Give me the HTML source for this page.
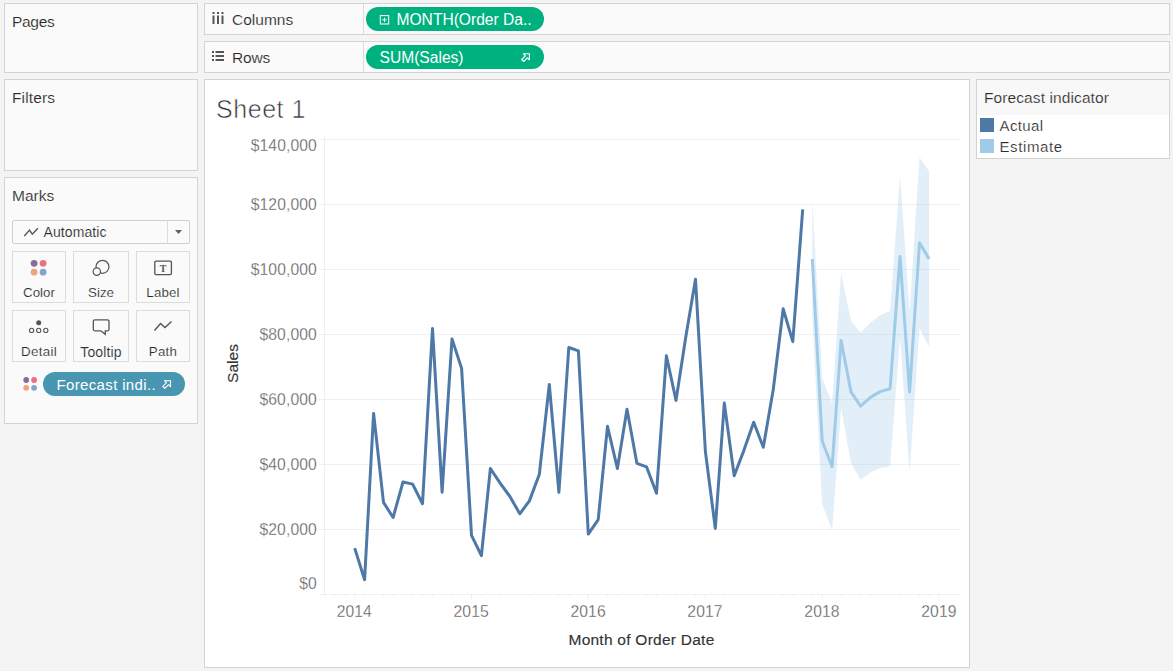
<!DOCTYPE html>
<html lang="en">
<head>
<meta charset="utf-8">
<title>Sheet 1</title>
<style>
html,body{margin:0;padding:0}
body{width:1173px;height:671px;background:#f4f4f4;position:relative;overflow:hidden;
 font-family:"Liberation Sans",Arial,sans-serif;font-size:15.5px;color:#2a2a2a}
.card{position:absolute;box-sizing:border-box;background:#fafafa;border:1px solid #d3d3d3}
.t{position:absolute;white-space:nowrap;line-height:18px;-webkit-text-stroke:0.15px #fafafa}
.btn{position:absolute;box-sizing:border-box;border:1px solid #dcdcdc;background:#fafafa;height:52px}
.btn span{position:absolute;left:0;right:0;top:32px;text-align:center;font-size:13.3px;line-height:18px;color:#2a2a2a;-webkit-text-stroke:0.15px #fafafa}
.pill{position:absolute;box-sizing:border-box;height:24px;border-radius:12px;color:#fff;font-size:15.6px;line-height:25.6px;white-space:nowrap}
.green{background:#00b180}
.blue{background:#4996b2}
svg{position:absolute;left:0;top:0;overflow:visible}
.ax text{font-family:"Liberation Sans",Arial,sans-serif;font-size:15.7px;letter-spacing:0.1px;fill:#555;stroke:#fff;stroke-width:0.3px}
</style>
</head>
<body>

<!-- left column cards -->
<div class="card" style="left:4px;top:3px;width:194px;height:70px"></div>
<div class="t" style="left:12px;top:13px;letter-spacing:-0.3px">Pages</div>

<div class="card" style="left:4px;top:79px;width:194px;height:92px"></div>
<div class="t" style="left:12px;top:89px;letter-spacing:0.15px">Filters</div>

<div class="card" style="left:4px;top:177px;width:194px;height:247px"></div>
<div class="t" style="left:12px;top:187px">Marks</div>

<!-- marks dropdown -->
<div class="card" style="left:12px;top:220px;width:178px;height:24px;border-color:#cfcfcf;border-radius:2px"></div>
<div style="position:absolute;left:167px;top:221px;width:1px;height:22px;background:#dcdcdc"></div>
<div class="t" style="left:43.5px;top:223px;font-size:14px;letter-spacing:0.1px">Automatic</div>

<!-- marks buttons -->
<div class="btn" style="left:12px;top:251px;width:54px"><span>Color</span></div>
<div class="btn" style="left:73px;top:251px;width:56px"><span>Size</span></div>
<div class="btn" style="left:136px;top:251px;width:54px"><span style="letter-spacing:0.15px">Label</span></div>
<div class="btn" style="left:12px;top:310px;width:54px"><span style="letter-spacing:0.3px">Detail</span></div>
<div class="btn" style="left:73px;top:310px;width:56px"><span style="font-size:14px;letter-spacing:0.15px">Tooltip</span></div>
<div class="btn" style="left:136px;top:310px;width:54px"><span style="letter-spacing:0.3px">Path</span></div>

<div class="pill blue" style="left:43px;top:372px;width:142px;padding-left:13.5px;font-size:15px;letter-spacing:0.35px">Forecast indi..</div>

<!-- shelves -->
<div class="card" style="left:204px;top:3px;width:966px;height:32px"></div>
<div class="card" style="left:204px;top:41px;width:966px;height:32px"></div>
<div style="position:absolute;left:363px;top:4px;width:1px;height:30px;background:#dcdcdc"></div>
<div style="position:absolute;left:363px;top:42px;width:1px;height:30px;background:#dcdcdc"></div>
<div class="t" style="left:232px;top:11px">Columns</div>
<div class="t" style="left:232px;top:49px;letter-spacing:-0.2px">Rows</div>
<div class="pill green" style="left:366px;top:7px;width:178px;padding-left:30.5px">MONTH(Order Da..</div>
<div class="pill green" style="left:366px;top:45px;width:178px;padding-left:13.5px">SUM(Sales)</div>

<!-- sheet -->
<div class="card" style="left:204px;top:79px;width:766px;height:589px;background:#fff"></div>
<div class="t" style="left:216px;top:94px;font-size:25px;line-height:30px;color:#333;letter-spacing:0.55px;-webkit-text-stroke:0.6px #fff">Sheet 1</div>

<!-- legend -->
<div class="card" style="left:976px;top:79px;width:194px;height:80px;background:#fff"></div>
<div style="position:absolute;left:977px;top:80px;width:192px;height:35px;background:#f8f8f8"></div>
<div class="t" style="left:984px;top:89px;color:#2a2a2a;letter-spacing:0.1px;-webkit-text-stroke:0.2px #f8f8f8">Forecast indicator</div>
<div style="position:absolute;left:980px;top:118px;width:14px;height:14px;background:#4e79a7"></div>
<div style="position:absolute;left:980px;top:139px;width:14px;height:14px;background:#a0cbe8"></div>
<div class="t" style="left:999.5px;top:117px;font-size:15px;color:#2a2a2a;letter-spacing:0.4px;-webkit-text-stroke:0.2px #fff">Actual</div>
<div class="t" style="left:999.5px;top:138px;font-size:15px;color:#2a2a2a;letter-spacing:0.6px;-webkit-text-stroke:0.2px #fff">Estimate</div>

<!-- icons + chart -->
<svg width="1173" height="671" viewBox="0 0 1173 671">
 <!-- columns icon -->
 <g fill="#555">
  <rect x="212.5" y="15.5" width="2" height="8.5"/><rect x="217" y="15.5" width="2" height="8.5"/><rect x="221.5" y="15.5" width="2" height="8.5"/>
  <rect x="212.5" y="12" width="2" height="2"/><rect x="217" y="12" width="2" height="2"/><rect x="221.5" y="12" width="2" height="2"/>
 </g>
 <!-- rows icon -->
 <g fill="#555">
  <rect x="215.5" y="51" width="8.5" height="2"/><rect x="215.5" y="55" width="8.5" height="2"/><rect x="215.5" y="59" width="8.5" height="2"/>
  <rect x="212" y="51" width="2" height="2"/><rect x="212" y="55" width="2" height="2"/><rect x="212" y="59" width="2" height="2"/>
 </g>
 <!-- plus box in pill -->
 <g fill="none" stroke="#fff" stroke-width="1">
  <rect x="380.3" y="15.6" width="8.4" height="8.4"/><path d="M382.3 19.8h4.4M384.5 17.6v4.4"/>
 </g>
 <!-- arrow in rows pill -->
 <path d="M523.4 53.8H529.4V59.8L527.4 57.8 523.7 61.5 521.7 59.5 525.4 55.8Z" fill="none" stroke="#fff" stroke-width="1.1" stroke-linejoin="round"/>
 <!-- arrow in marks pill -->
 <path d="M164.5 380.7H170.5V386.7L168.5 384.7 164.8 388.4 162.8 386.4 166.5 382.7Z" fill="none" stroke="#fff" stroke-width="1.1" stroke-linejoin="round"/>
 <!-- dropdown -->
 <path d="M24.3 236l5.2-5.9 2.8 4.1 5.6-6" fill="none" stroke="#555" stroke-width="1.4"/>
 <path d="M175 230h7l-3.5 4z" fill="#606060"/>
 <!-- color dots (button) -->
 <circle cx="34.1" cy="263.3" r="3.4" fill="#876d9e"/><circle cx="43.1" cy="263.3" r="3.4" fill="#ee6f82"/>
 <circle cx="34.1" cy="272.2" r="3.4" fill="#eda57a"/><circle cx="43.1" cy="272.2" r="3.4" fill="#7fa6d0"/>
 <!-- color dots (pill row) -->
 <circle cx="26.2" cy="380" r="2.9" fill="#876d9e"/><circle cx="34.1" cy="380" r="2.9" fill="#ee6f82"/>
 <circle cx="26.2" cy="387.8" r="2.9" fill="#eda57a"/><circle cx="34.1" cy="387.8" r="2.9" fill="#7fa6d0"/>
 <!-- size -->
 <g fill="none" stroke="#555" stroke-width="1.2"><circle cx="102.5" cy="266.8" r="6.5"/><circle cx="96.8" cy="271.6" r="3.7" fill="#fafafa"/></g>
 <!-- label -->
 <rect x="154.8" y="261.1" width="16.6" height="13.5" rx="1" fill="none" stroke="#555" stroke-width="1.3"/>
 <text x="163.1" y="271.5" text-anchor="middle" font-family="Liberation Serif,serif" font-weight="bold" font-size="10" fill="#555">T</text>
 <!-- detail -->
 <circle cx="38.7" cy="322.8" r="2.5" fill="#555"/>
 <g fill="none" stroke="#555" stroke-width="1.1"><circle cx="31.6" cy="330.4" r="2.1"/><circle cx="38.7" cy="330.4" r="2.1"/><circle cx="45.8" cy="330.4" r="2.1"/></g>
 <!-- tooltip -->
 <path d="M94.8 319.8h12.7a1.5 1.5 0 0 1 1.5 1.5v8a1.5 1.5 0 0 1-1.5 1.5h-2.2v3.5l-4.5-3.5h-6a1.5 1.5 0 0 1-1.5-1.5v-8a1.5 1.5 0 0 1 1.5-1.5z" fill="none" stroke="#555" stroke-width="1.3"/>
 <!-- path -->
 <path d="M154.5 330.5l6-7 4.5 4 6.5-6" fill="none" stroke="#555" stroke-width="1.4"/>

 <!-- chart -->
 <g class="ax">
  <g stroke="#f0f0f0" stroke-width="1">
   <path d="M325 139.5h635M325 204.5h635M325 269.5h635M325 334.5h635M325 399.5h635M325 464.5h635M325 529.5h635"/>
  </g>
  <g stroke="#efefef" stroke-width="1">
   <path d="M324.5 135v460M319 594.5h641"/>
   <path d="M319 139.5h6M319 204.5h6M319 269.5h6M319 334.5h6M319 399.5h6M319 464.5h6M319 529.5h6"/>
   <path d="M325.3 595v1.5 M335.2 595v1.5 M344.8 595v1.5 M354.7 595v4 M364.6 595v1.5 M373.6 595v1.5 M383.5 595v1.5 M393.1 595v1.5 M403.0 595v1.5 M412.6 595v1.5 M422.5 595v1.5 M432.5 595v1.5 M442.1 595v1.5 M452.0 595v1.5 M461.6 595v1.5 M471.5 595v4 M481.4 595v1.5 M490.4 595v1.5 M500.3 595v1.5 M509.9 595v1.5 M519.8 595v1.5 M529.4 595v1.5 M539.3 595v1.5 M549.3 595v1.5 M558.9 595v1.5 M568.8 595v1.5 M578.4 595v1.5 M588.3 595v4 M598.2 595v1.5 M607.5 595v1.5 M617.4 595v1.5 M627.0 595v1.5 M636.9 595v1.5 M646.5 595v1.5 M656.5 595v1.5 M666.4 595v1.5 M676.0 595v1.5 M685.9 595v1.5 M695.5 595v1.5 M705.4 595v4 M715.3 595v1.5 M724.3 595v1.5 M734.2 595v1.5 M743.8 595v1.5 M753.7 595v1.5 M763.3 595v1.5 M773.3 595v1.5 M783.2 595v1.5 M792.8 595v1.5 M802.7 595v1.5 M812.3 595v1.5 M822.2 595v4 M832.1 595v1.5 M841.1 595v1.5 M851.0 595v1.5 M860.6 595v1.5 M870.5 595v1.5 M880.1 595v1.5 M890.1 595v1.5 M900.0 595v1.5 M909.6 595v1.5 M919.5 595v1.5 M929.1 595v1.5 M939.0 595v4 M948.9 595v1.5"/>
  </g>
  <g text-anchor="end">
   <text x="316.9" y="151">$140,000</text>
   <text x="316.9" y="210">$120,000</text>
   <text x="316.9" y="275">$100,000</text>
   <text x="316.9" y="340">$80,000</text>
   <text x="316.9" y="405">$60,000</text>
   <text x="316.9" y="470">$40,000</text>
   <text x="316.9" y="535">$20,000</text>
   <text x="316.9" y="589">$0</text>
  </g>
  <g text-anchor="middle">
   <text x="354.3" y="617">2014</text>
   <text x="471.2" y="617">2015</text>
   <text x="588.1" y="617">2016</text>
   <text x="705" y="617">2017</text>
   <text x="822" y="617">2018</text>
   <text x="938.9" y="617">2019</text>
  </g>
  <text x="641.5" y="645" text-anchor="middle" style="fill:#333;font-size:15.5px;letter-spacing:0.25px;stroke:#333;stroke-width:0.15px">Month of Order Date</text>
  <text transform="translate(238,363.5) rotate(-90)" text-anchor="middle" style="fill:#333;font-size:15.5px;letter-spacing:0;stroke:#333;stroke-width:0.15px">Sales</text>
 </g>
 <polygon points="812.3,199.9 822.2,377.9 832.1,402.8 841.1,273.0 851.0,320.8 860.6,332.8 870.5,322.7 880.1,315.2 890.1,311.0 900.0,175.5 909.6,311.0 919.5,157.6 929.1,171.2 929.1,346.8 919.5,327.9 909.6,472.8 900.0,337.3 890.1,466.4 880.1,468.0 870.5,472.2 860.6,479.7 851.0,463.1 841.1,408.2 832.1,530.5 822.2,504.0 812.3,318.1" fill="#a0cbe8" fill-opacity="0.3"/>
 <polyline points="812.3,259.0 822.2,441.0 832.1,466.7 841.1,340.6 851.0,391.9 860.6,406.2 870.5,397.4 880.1,391.6 890.1,388.7 900.0,256.4 909.6,391.9 919.5,242.8 929.1,259.0" fill="none" stroke="#a0cbe8" stroke-width="3" stroke-linejoin="round"/>
 <polyline points="354.7,548.1 364.6,579.7 373.6,413.4 383.5,502.4 393.1,517.5 403.0,482.0 412.6,484.1 422.5,503.7 432.5,328.6 442.1,492.2 452.0,338.9 461.6,368.4 471.5,535.3 481.4,555.6 490.4,468.5 500.3,483.3 509.9,496.5 519.8,513.8 529.4,500.9 539.3,474.5 549.3,384.5 558.9,492.3 568.8,347.5 578.4,350.9 588.3,534.1 598.2,519.7 607.5,426.3 617.4,468.5 627.0,409.2 636.9,463.3 646.5,466.8 656.5,493.3 666.4,355.8 676.0,400.4 685.9,336.3 695.5,279.2 705.4,451.5 715.3,528.4 724.3,403.1 734.2,475.7 743.8,450.6 753.7,422.2 763.3,447.3 773.3,389.3 783.2,308.8 792.8,341.6 802.7,209.4" fill="none" stroke="#4e79a7" stroke-width="3" stroke-linejoin="round"/>
</svg>
</body>
</html>
